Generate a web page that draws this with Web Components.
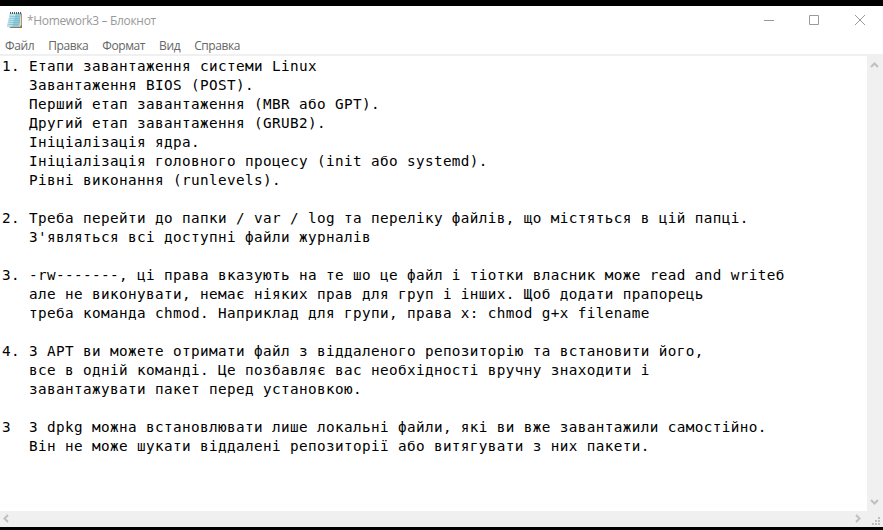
<!DOCTYPE html>
<html lang="uk">
<head>
<meta charset="utf-8">
<title>Блокнот</title>
<style>
html,body{margin:0;height:100%;overflow:hidden;background:#000}
</style>
</head>
<body>
<notepad-window></notepad-window>
<script>
function define(name, html){
  const t=document.createElement('template');
  t.innerHTML=html;
  customElements.define(name,class extends HTMLElement{
    constructor(){super();this.attachShadow({mode:'open'}).append(t.content.cloneNode(true));}
  });
}
define('title-bar',`<style>
:host{display:flex;height:32px;align-items:center;color:#999;font-size:12px;letter-spacing:-.33px}
.icon{width:18px;height:18px;margin:-4px 3px 0 6px;flex:none}
.name{flex:1;white-space:nowrap;padding-bottom:3px}
.controls{display:flex;width:138px;height:32px;flex:none}
.controls svg{width:46px;height:32px;fill:none;stroke:#999}
</style>
<svg class="icon" viewBox="0 0 18 18"><path d="M4.5 2.5H16V17H4.5L3 16Z" fill="#8b7a5c"/><path d="M14.5 3H15.3V14L13.5 16H5V15.5H13Z" fill="#e9dfc8"/><path d="M4 2H14.5L13 15.7H1Z" fill="#8ecbdd"/><path d="M4 2H10L6 15.7H1Z" fill="#b9e4ee"/><path d="M4 5.5H13.5M3.6 7.5H13.3M3.2 9.5H13.2M2.8 11.5H13M2.4 13.5H12.7" stroke="#66acc2" stroke-width=".5"/><path d="M4.5 1V3M6.5 1V3M8.5 1V3M10.5 1V3M12.5 1V3M14.5 1V3" stroke="#555"/></svg>
<div class="name"><slot></slot></div>
<div class="controls">
<svg viewBox="0 0 46 32"><path d="M19 14.5H29"/></svg>
<svg viewBox="0 0 46 32"><path d="M18.5 9.5H27.5V18.5H18.5Z"/></svg>
<svg viewBox="0 0 46 32"><path d="M18 9L28 19M28 9L18 19"/></svg>
</div>`);
define('menu-bar',`<style>
:host{display:flex;height:18px;padding-left:5px;gap:14px;color:#666;font-size:12px;letter-spacing:-.4px;line-height:16px;border-bottom:2px solid #f0f0f0;box-sizing:border-box;white-space:nowrap}
</style><slot></slot>`);
define('menu-entry',`<style>:host{display:block}</style><slot></slot>`);
define('text-document',`<style>
:host{display:block;flex:1;min-width:0;background:#fff;color:#000;overflow:hidden;padding:1px 0 0 2px;
font:14.3px/19px "DejaVu Sans Mono",monospace;letter-spacing:.39px;white-space:pre}
</style><slot></slot>`);
define('scroll-vertical',`<style>
:host{display:flex;flex-direction:column;justify-content:space-between;width:16px;flex:none;background:#f0f0f0}
svg{width:16px;height:17px;fill:none;stroke:#bfbfbf;stroke-width:2}
</style><svg viewBox="0 0 16 17"><path d="M4 11L7.5 7.5L11 11"/></svg><svg viewBox="0 0 16 17"><path d="M4 6L7.5 9.5L11 6"/></svg>`);
define('scroll-horizontal',`<style>
:host{display:flex;height:16px;background:#f0f0f0;flex:none}
svg{height:16px;flex:none;stroke:#bfbfbf;stroke-width:2;fill:none}
span{flex:1}
</style><svg width="17" viewBox="0 0 17 16"><path d="M8 4L4.5 7.5L8 11"/></svg><span></span>
<svg width="17" viewBox="0 0 17 16"><path d="M6 4L9.5 7.5L6 11"/></svg>
<svg width="16" viewBox="0 0 16 16"><path stroke="none" fill="#bfbfbf" d="M11 6h2v2h-2zM8 9h2v2h-2zM11 9h2v2h-2zM5 12h2v2h-2zM8 12h2v2h-2zM11 12h2v2h-2z"/></svg>`);
define('notepad-window',`<style>
:host{display:flex;flex-direction:column;box-sizing:border-box;width:883px;height:530px;background:#fff;border-top:6px solid #000;border-bottom:3px solid #000;font-family:"Open Sans",sans-serif}
main{display:flex;flex:1;min-height:0}
title-bar,menu-bar{flex:none}
</style>
<title-bar>*Homework3 – Блокнот</title-bar>
<menu-bar><menu-entry>Файл</menu-entry><menu-entry>Правка</menu-entry><menu-entry>Формат</menu-entry><menu-entry>Вид</menu-entry><menu-entry>Справка</menu-entry></menu-bar>
<main><text-document>1. Етапи завантаження системи Linux
   Завантаження BIOS (POST).
   Перший етап завантаження (MBR або GPT).
   Другий етап завантаження (GRUB2).
   Ініціалізація ядра.
   Ініціалізація головного процесу (init або systemd).
   Рівні виконання (runlevels).

2. Треба перейти до папки / var / log та переліку файлів, що містяться в цій папці.
   З'являться всі доступні файли журналів

3. -rw-------, ці права вказують на те шо це файл і тіотки власник може read and writeб
   але не виконувати, немає ніяких прав для груп і інших. Щоб додати прапорець
   треба команда chmod. Наприклад для групи, права x: chmod g+x filename

4. З APT ви можете отримати файл з віддаленого репозиторію та встановити його,
   все в одній команді. Це позбавляє вас необхідності вручну знаходити і
   завантажувати пакет перед установкою.

3  З dpkg можна встановлювати лише локальні файли, які ви вже завантажили самостійно.
   Він не може шукати віддалені репозиторії або витягувати з них пакети.</text-document><scroll-vertical></scroll-vertical></main>
<scroll-horizontal></scroll-horizontal>`);
</script>
</body>
</html>
